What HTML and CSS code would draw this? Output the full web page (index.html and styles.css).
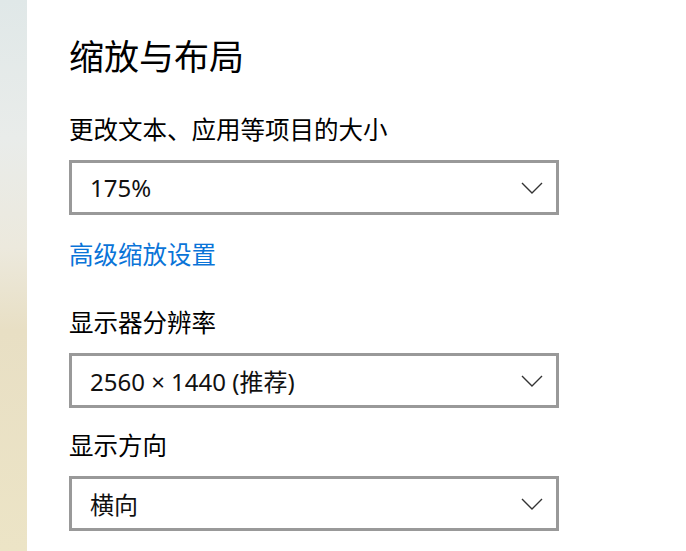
FILE: index.html
```html
<!DOCTYPE html>
<html lang="zh">
<head>
  <meta charset="UTF-8" />
  <title>缩放与布局</title>
  <link rel="stylesheet" href="styles.css">
</head>
<body>
  <div class="page">
    <div class="side"></div>

    <div class="content">
      <h1>缩放与布局</h1>

      <div class="label">更改文本、应用等项目的大小</div>
      <div class="select">
        <span>175%</span>
        <svg class="chev" width="22" height="12" viewBox="0 0 22 12"><path d="M1 1 L11 11 L21 1" /></svg>
      </div>

      <a class="link" href="#">高级缩放设置</a>

      <div class="label gap">显示器分辨率</div>
      <div class="select">
        <span>2560 × 1440 (推荐)</span>
        <svg class="chev" width="22" height="12" viewBox="0 0 22 12"><path d="M1 1 L11 11 L21 1" /></svg>
      </div>

      <div class="label tight">显示方向</div>
      <div class="select">
        <span>横向</span>
        <svg class="chev" width="22" height="12" viewBox="0 0 22 12"><path d="M1 1 L11 11 L21 1" /></svg>
      </div>
    </div>
  </div>
</body>
</html>
```

FILE: styles.css
```css
body {
  margin: 0;
  background: #fff;
  font-family: "Noto Sans", "Noto Sans CJK SC", sans-serif;
  color: #000;
}

.page {
  display: flex;
  height: 551px;
  overflow: hidden;
}

.side {
  width: 27px;
  flex-shrink: 0;
  background: linear-gradient(to bottom, #e0e8e8 0%, #e9ecea 25%, #ece9dd 45%, #e8dfc4 60%, #ece4c6 100%);
}

.content {
  padding: 35px 0 0 42px;
}

h1 {
  margin: 0;
  font-size: 35px;
  font-weight: normal;
  line-height: 44px;
}

.label {
  margin-top: 24px;
  font-size: 24.5px;
  line-height: 32px;
}

h1 + .label {
  margin-top: 35px;
}

.label.gap {
  margin-top: 36px;
}

.label.tight {
  margin-top: 22px;
}

.select {
  box-sizing: border-box;
  width: 490px;
  height: 55px;
  margin-top: 14px;
  border: 3px solid #999;
  padding: 0 13px 0 18px;
  display: flex;
  align-items: center;
  justify-content: space-between;
  font-size: 24px;
  color: #111;
}

.chev path {
  fill: none;
  stroke: #333;
  stroke-width: 1.4;
}

.link {
  display: block;
  margin-top: 24px;
  font-size: 24.5px;
  line-height: 32px;
  color: #0a74d8;
  text-decoration: none;
}
```
